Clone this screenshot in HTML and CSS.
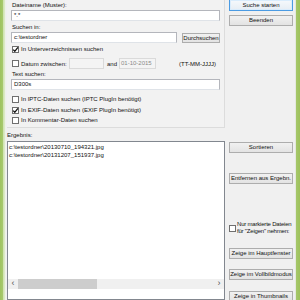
FILE: index.html
```html
<!DOCTYPE html>
<html lang="de">
<head>
  <meta charset="UTF-8">
  <title>Dateisuche</title>
  <link rel="stylesheet" href="styles.css">
</head>
<body>
  <div class="window">
    <div class="edge-left"></div>

    <div class="main">
      <div class="search-panel">
        <div class="label first">Dateiname (Muster):</div>
        <div class="field">*.*</div>

        <div class="label second">Suchen in:</div>
        <div class="row">
          <div class="field path">c:\testordner</div>
          <div class="btn browse">Durchsuchen</div>
        </div>

        <div class="check sub">
          <span class="box"><svg viewBox="0 0 7 7"><path d="M1.2 3.6 L2.8 5.3 L5.9 1.3" /></svg></span>
          In Unterverzeichnissen suchen
        </div>

        <div class="row date-row">
          <span class="box"></span>
          <span class="date-label">Datum zwischen:</span>
          <div class="field date disabled"></div>
          <span class="and">and</span>
          <div class="field date disabled grey">01-10-2015</div>
          <span class="fmt">(TT-MM-JJJJ)</span>
        </div>

        <div class="label third">Text suchen:</div>
        <div class="field">D300s</div>

        <div class="check iptc">
          <span class="box"></span>
          <span class="opt">In IPTC-Daten suchen</span>
          <span>(IPTC PlugIn ben&ouml;tigt)</span>
        </div>
        <div class="check exif">
          <span class="box"><svg viewBox="0 0 7 7"><path d="M1.2 3.6 L2.8 5.3 L5.9 1.3" /></svg></span>
          <span class="opt">In EXIF-Daten suchen</span>
          <span>(EXIF PlugIn ben&ouml;tigt)</span>
        </div>
        <div class="check">
          <span class="box"></span>
          In Kommentar-Daten suchen
        </div>
      </div>

      <div class="label result">Ergebnis:</div>
      <div class="list">
        <div class="items">
          <div>c:\testordner\20130710_194321.jpg</div>
          <div>c:\testordner\20131207_151937.jpg</div>
        </div>
        <div class="hscroll">
          <span class="arrow">&lsaquo;</span>
          <span class="thumb"></span>
          <span class="track"></span>
          <span class="arrow">&rsaquo;</span>
        </div>
      </div>
    </div>

    <div class="side">
      <div class="btn start">Suche starten</div>
      <div class="btn quit">Beenden</div>
      <div class="btn sort">Sortieren</div>
      <div class="btn remove">Entfernen aus Ergebn.</div>
      <div class="marked">
        <span class="box"></span>
        <span class="marked-text">Nur markierte Dateien<br>f&uuml;r "Zeigen" nehmen:</span>
      </div>
      <div class="btn main-win">Zeige im Hauptfenster</div>
      <div class="btn full">Zeige im Vollbildmodus</div>
      <div class="btn thumbs">Zeige in Thumbnails</div>
    </div>

    <div class="edge-right"></div>
  </div>
</body>
</html>
```

FILE: styles.css
```css
html, body {
  margin: 0;
  padding: 0;
  overflow: hidden;
}
body {
  font-family: 'Liberation Sans', Arial, sans-serif;
  font-size: 6px;
  color: #111;
  background: #f0f0f0;
}
.window {
  display: flex;
  height: 300px;
  width: 300px;
  overflow: hidden;
}
.edge-left {
  width: 6px;
  flex: none;
  background: linear-gradient(to right, #9ec35f 0, #a8c96e 3px, #cde1ab 3px, #dfeccb 5px, #eef2e8 5px);
}
.edge-right {
  width: 5px;
  flex: none;
  background: linear-gradient(to right, #e4e8de 0, #e4e8de 1px, #a6c76a 1px, #9dc15c 5px);
}
.main {
  width: 219px;
  flex: none;
  display: flex;
  flex-direction: column;
}
.search-panel {
  margin-left: 1px;
  padding: 0 4px 2px 4px;
  border-right: 1px solid #dcdcdc;
  border-bottom: 1px solid #dcdcdc;
  background: #f2f2f2;
  display: flex;
  flex-direction: column;
}
.label {
  line-height: 10px;
  padding-left: 1px;
}
.label.first {
  line-height: 9px;
  padding-top: 1px;
}
.label.second {
  margin-top: 1px;
}
.label.result {
  margin: 2px 0 1px 1px;
  padding-left: 0;
}
.field {
  box-sizing: border-box;
  height: 11px;
  width: 209px;
  border: 1px solid #b4b6bc;
  border-bottom-color: #dfe3e8;
  background: #fff;
  line-height: 9px;
  padding-left: 2px;
  white-space: nowrap;
}
.row {
  display: flex;
  align-items: center;
}
.field.path {
  width: 166px;
}
.btn {
  box-sizing: border-box;
  height: 11px;
  border: 1px solid #adadad;
  background: linear-gradient(#f1f1f1, #e3e3e3);
  text-align: center;
  line-height: 9px;
  white-space: nowrap;
}
.browse {
  width: 38px;
  margin-left: 5px;
  height: 10px;
  line-height: 8px;
}
.check {
  display: flex;
  align-items: center;
  height: 10px;
  padding-left: 1px;
}
.check.sub {
  margin-top: 1px;
}
.check.iptc {
  margin-top: 4px;
}
.check.exif {
  margin-top: 1px;
}
.box {
  box-sizing: border-box;
  width: 7px;
  height: 7px;
  flex: none;
  border: 1px solid #6f6f6f;
  background: #fff;
  margin-right: 2px;
  position: relative;
}
.box svg {
  position: absolute;
  left: -1px;
  top: -1px;
  width: 7px;
  height: 7px;
}
.box path {
  fill: none;
  stroke: #111;
  stroke-width: 1.3;
}
.opt {
  width: 61px;
}
.date-row {
  height: 11px;
  margin-top: 4px;
  padding-left: 1px;
}
.date-label {
  width: 48px;
}
.field.date {
  width: 35px;
}
.field.disabled {
  background: #f4f4f4;
  border-color: #dadada;
}
.field.grey {
  width: 37px;
  color: #8a8a8a;
  padding-left: 1px;
}
.and {
  width: 15px;
  padding-left: 3px;
  box-sizing: border-box;
}
.fmt {
  margin-left: 23px;
}
.label.third {
  margin-top: 0;
}
.list {
  margin-left: 1px;
  width: 218px;
  height: 163px;
  box-sizing: border-box;
  border: 1px solid #82878f;
  background: #fff;
  display: flex;
  flex-direction: column;
}
.items {
  flex: 1;
  padding: 1px 0 0 1px;
  line-height: 8px;
}
.hscroll {
  display: flex;
  height: 10px;
  margin-bottom: 10px;
  background: #f0f0f0;
}
.arrow {
  width: 10px;
  text-align: center;
  line-height: 9px;
  font-size: 9px;
  color: #555;
}
.thumb {
  width: 79px;
  background: #cdcdcd;
}
.track {
  flex: 1;
}
.side {
  width: 70px;
  flex: none;
  padding-left: 4px;
  box-sizing: border-box;
  display: flex;
  flex-direction: column;
}
.side .btn {
  width: 64px;
}
.start {
  margin-top: -1px;
  height: 12px;
  line-height: 10px;
  border-color: #4b9be3;
  background: linear-gradient(#f6f9fc, #e6edf4);
  box-shadow: inset 0 0 0 1px #d9ecfc;
}
.quit {
  margin-top: 4px;
}
.sort {
  margin-top: 116px;
}
.remove {
  margin-top: 20px;
}
.marked {
  display: flex;
  align-items: center;
  margin-top: 37px;
  line-height: 7px;
}
.marked .box {
  margin-right: 1px;
}
.marked-text {
  white-space: nowrap;
  letter-spacing: -0.2px;
}
.main-win {
  margin-top: 13px;
}
.full {
  margin-top: 10px;
}
.thumbs {
  margin-top: 11px;
}
```
